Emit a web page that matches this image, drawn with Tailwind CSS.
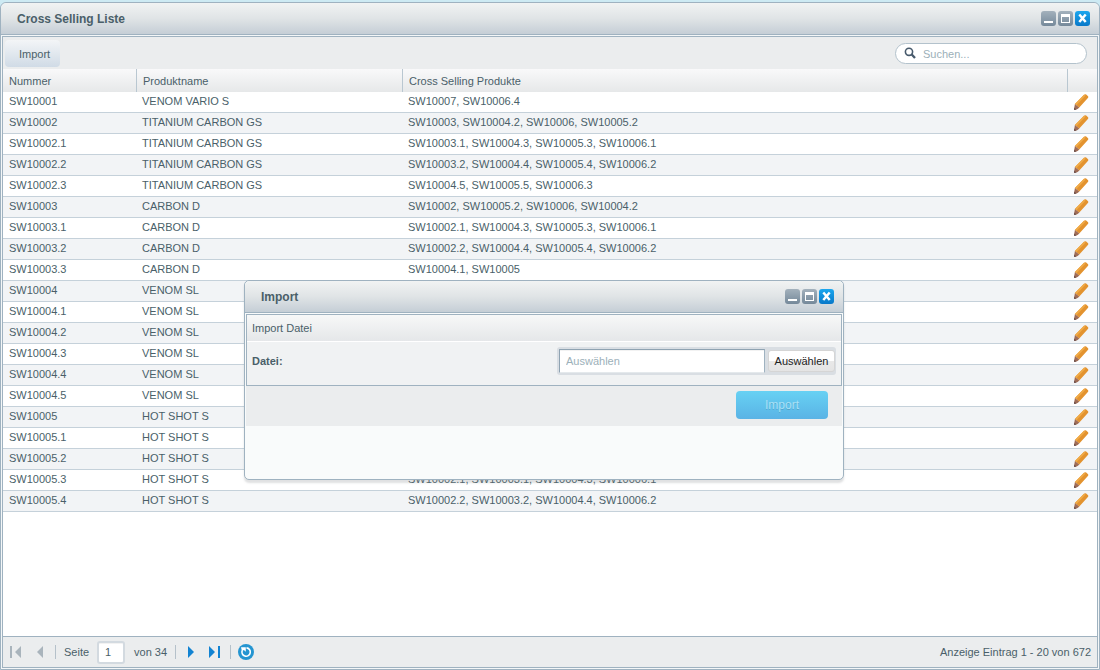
<!DOCTYPE html>
<html lang="de">
<head>
<meta charset="utf-8">
<title>Cross Selling Liste</title>
<script src="https://cdn.jsdelivr.net/npm/@tailwindcss/browser@4"></script>
</head>
<body class="relative flex h-screen flex-col overflow-hidden bg-[#cdeaf3] pt-0.5 font-['Liberation_Sans',Arial,sans-serif] text-[11px] leading-4 text-[#4a5f69]">

<svg class="hidden" aria-hidden="true">
  <symbol id="pencil" viewBox="0 0 16 16">
    <path d="M11 .8 Q12 -.3 13.200.6 L14.800 1.900 Q15.800 2.900 14.900 4 L6.300 13.600 L1.900 10 Z" fill="#e3932f"/>
    <path d="M11 .8 L1.900 10 L3.400 11.300 L12.600 1.400 Z" fill="#f0ab48"/>
    <path d="M1.900 10 L6.300 13.600 L4.600 15 L1.600 16 Q1 16 1 15.200 Z" fill="#a06c55"/>
    <path d="M1.200 13.400 L3.600 15.400 L1.600 16 Q1 16 1 15.200 Z" fill="#6f5350"/>
  </symbol>
</svg>

<main class="flex min-h-0 flex-1 flex-col rounded-t-md border border-[#9fb2c0] bg-[#f4f7f8]">
  <header class="flex h-8 shrink-0 items-center justify-between rounded-t-md border-b border-[#9fb2c0] bg-linear-to-b from-[#f1f3f3] via-[#e0e4e6] to-[#c5ced6] pr-[9px] pl-4">
    <h1 class="text-xs font-bold">Cross Selling Liste</h1>
    <div class="flex gap-0.5">
      <button aria-label="Minimieren" class="size-[15px] rounded-[3px] bg-linear-to-b from-[#a3b1bc] to-[#75899a]"><svg viewBox="0 0 15 15"><path d="M3 10h9v2H3z" fill="#fff"/></svg></button>
      <button aria-label="Maximieren" class="size-[15px] rounded-[3px] bg-linear-to-b from-[#a3b1bc] to-[#75899a]"><svg viewBox="0 0 15 15"><path d="M3 3h9v9H3zM4 6v5h7V6z" fill="#fff" fill-rule="evenodd"/></svg></button>
      <button aria-label="Schließen" class="size-[15px] rounded-[3px] bg-linear-to-b from-[#1ca7ee] to-[#0878c9]"><svg viewBox="0 0 15 15"><path d="M4.300 3.500l6.400 7.500M10.700 3.500l-6.400 7.500" stroke="#fff" stroke-width="2.500"/></svg></button>
    </div>
  </header>

  <div class="flex min-h-0 flex-1 flex-col p-px">
    <div class="flex min-h-0 flex-1 flex-col border border-[#9fb2c0] bg-white">
      <div class="flex h-8 shrink-0 items-center justify-between bg-[#ebedee] pr-2.5 pl-0.5">
        <button class="h-[27px] rounded bg-linear-to-b from-[#f3f5f7] to-[#d0dbe6] pt-0.5 pr-2.5 pl-3.5">Import</button>
        <div class="flex h-[21px] w-48 items-center gap-[7px] rounded-full border border-[#b3c2cc] bg-white pl-2">
          <svg class="size-3 shrink-0" viewBox="0 0 12 12" fill="none" stroke="#475a6c"><circle cx="5" cy="4.800" r="3.600" stroke-width="1.600"/><path d="M7.500 7.300L11 11" stroke-width="2.300"/></svg>
          <input aria-label="Suchen" placeholder="Suchen..." class="w-full min-w-0 bg-transparent pt-px outline-none placeholder:text-[#9cb0b9]">
        </div>
      </div>

      <div class="min-h-0 flex-1 overflow-hidden">
        <table class="w-full table-fixed border-separate border-spacing-0">
          <colgroup><col class="w-[133px]"><col class="w-[266px]"><col><col class="w-[30px]"></colgroup>
          <thead>
            <tr class="h-[23px] bg-linear-to-b from-[#f9f9fa] to-[#e6e8e9] text-left">
              <th class="p-0 pl-1.5 font-normal">Nummer</th>
              <th class="border-l border-[#b9c7d1] p-0 pl-1.5 font-normal">Produktname</th>
              <th class="border-l border-[#b9c7d1] p-0 pl-1.5 font-normal">Cross Selling Produkte</th>
              <th class="border-l border-[#b9c7d1] p-0" aria-label="Aktionen"></th>
            </tr>
          </thead>
          <tbody id="rows"></tbody>
        </table>
      </div>

      <footer class="flex h-[31px] shrink-0 items-center border-t border-[#9fb2c0] bg-[#ebedee] pr-1.5 pl-[7px]">
        <button aria-label="Erste Seite"><svg class="h-3 w-[11px]" viewBox="0 0 11 12" fill="#a9b4bc"><path d="M0 0h2v12H0zM11 0v12L5 6z"/></svg></button>
        <button aria-label="Vorherige Seite" class="ml-4"><svg class="h-3 w-[6px]" viewBox="0 0 6 12" fill="#a9b4bc"><path d="M6 0v12L0 6z"/></svg></button>
        <span class="ml-3 h-3.5 w-px bg-[#b5c1ca]"></span>
        <label for="page" class="ml-2">Seite</label>
        <input id="page" value="1" class="ml-2 h-[23px] w-7 rounded-[3px] border-2 border-[#d3dae0] bg-white pl-1.5 inset-shadow-2xs outline-none">
        <span class="ml-[9px]">von 34</span>
        <span class="ml-2 h-3.5 w-px bg-[#b5c1ca]"></span>
        <button aria-label="Nächste Seite" class="ml-3"><svg class="h-3 w-[6px]" viewBox="0 0 6 12" fill="#1283d2"><path d="M0 0v12l6-6z"/></svg></button>
        <button aria-label="Letzte Seite" class="ml-[15px]"><svg class="h-3 w-[11px]" viewBox="0 0 11 12" fill="#1283d2"><path d="M9 0h2v12H9zM0 0v12l6-6z"/></svg></button>
        <span class="ml-2.5 h-3.5 w-px bg-[#b5c1ca]"></span>
        <button aria-label="Aktualisieren" class="ml-[7px]"><svg class="size-4" viewBox="0 0 16 16" fill="none"><circle cx="8" cy="8" r="8" fill="#2495d1"/><path d="M8.500 3.900a4.200 4.200 0 1 1-4.300 2.600" stroke="#fff" stroke-width="1.600"/><path d="M3 3.200h4.800v4.600L5.800 6 4 7.200z" fill="#fff"/></svg></button>
        <span class="ml-auto">Anzeige Eintrag 1 - 20 von 672</span>
      </footer>
    </div>
  </div>
</main>

<section role="dialog" aria-labelledby="dialogTitle" class="absolute top-[280px] left-[244px] flex h-[200px] w-[600px] flex-col rounded-[5px] border border-[#9fb2c0] bg-[#f9fbfb] shadow-[0_3px_2px_rgba(130,135,140,0.25)]">
  <header class="flex h-8 shrink-0 items-center justify-between rounded-t-[5px] border-b border-[#9fb2c0] bg-linear-to-b from-[#f1f3f3] via-[#e0e4e6] to-[#c5ced6] pr-[9px] pl-4">
    <h2 id="dialogTitle" class="text-xs font-bold">Import</h2>
    <div class="flex gap-0.5">
      <button aria-label="Minimieren" class="size-[15px] rounded-[3px] bg-linear-to-b from-[#a3b1bc] to-[#75899a]"><svg viewBox="0 0 15 15"><path d="M3 10h9v2H3z" fill="#fff"/></svg></button>
      <button aria-label="Maximieren" class="size-[15px] rounded-[3px] bg-linear-to-b from-[#a3b1bc] to-[#75899a]"><svg viewBox="0 0 15 15"><path d="M3 3h9v9H3zM4 6v5h7V6z" fill="#fff" fill-rule="evenodd"/></svg></button>
      <button aria-label="Schließen" class="size-[15px] rounded-[3px] bg-linear-to-b from-[#1ca7ee] to-[#0878c9]"><svg viewBox="0 0 15 15"><path d="M4.300 3.500l6.400 7.500M10.700 3.500l-6.400 7.500" stroke="#fff" stroke-width="2.500"/></svg></button>
    </div>
  </header>
  <div class="p-px">
    <div class="border border-[#9fb2c0] bg-[#f0f2f3]">
      <h3 class="flex h-[27px] items-center border-b border-white bg-linear-to-b from-[#f7f8f8] to-[#e5e7e9] pl-[5px]">Import Datei</h3>
      <div class="flex h-[43px] items-start justify-between pt-[5px] pr-[5px] pl-[5px]">
        <label for="file" class="flex h-7 items-center font-bold">Datei:</label>
        <div class="flex h-7 w-[279px] items-center gap-[3px] rounded-[3px] bg-[#d9dee3] py-0.5 pr-px pl-0.5">
          <input id="file" placeholder="Auswählen" class="h-6 min-w-0 flex-1 border border-t-[#8fa3b2] border-r-[#9fb2c0] border-b-[#e4e9ec] border-l-[#8fa3b2] bg-white pl-1.5 inset-shadow-2xs outline-none placeholder:text-[#9cb0b9]">
          <button class="h-[22px] w-[67px] rounded-[3px] border border-[#d5d5d5] bg-linear-to-b from-white from-50% via-[#e9e9e9] via-50% to-[#e4e4e4] text-[#222]">Auswählen</button>
        </div>
      </div>
    </div>
    <div class="flex h-10 items-start justify-end bg-[#ebedee] pt-[5px] pr-3.5">
      <button disabled class="h-7 w-[92px] rounded bg-linear-to-b from-[#67d1f3] to-[#5ab3e5] text-xs text-[#a9e0f5] text-shadow-2xs">Import</button>
    </div>
  </div>
</section>

<script>
const rows = [
  ["SW10001", "VENOM VARIO S", "SW10007, SW10006.4"],
  ["SW10002", "TITANIUM CARBON GS", "SW10003, SW10004.2, SW10006, SW10005.2"],
  ["SW10002.1", "TITANIUM CARBON GS", "SW10003.1, SW10004.3, SW10005.3, SW10006.1"],
  ["SW10002.2", "TITANIUM CARBON GS", "SW10003.2, SW10004.4, SW10005.4, SW10006.2"],
  ["SW10002.3", "TITANIUM CARBON GS", "SW10004.5, SW10005.5, SW10006.3"],
  ["SW10003", "CARBON D", "SW10002, SW10005.2, SW10006, SW10004.2"],
  ["SW10003.1", "CARBON D", "SW10002.1, SW10004.3, SW10005.3, SW10006.1"],
  ["SW10003.2", "CARBON D", "SW10002.2, SW10004.4, SW10005.4, SW10006.2"],
  ["SW10003.3", "CARBON D", "SW10004.1, SW10005"],
  ["SW10004", "VENOM SL", ""],
  ["SW10004.1", "VENOM SL", ""],
  ["SW10004.2", "VENOM SL", ""],
  ["SW10004.3", "VENOM SL", ""],
  ["SW10004.4", "VENOM SL", ""],
  ["SW10004.5", "VENOM SL", ""],
  ["SW10005", "HOT SHOT S", ""],
  ["SW10005.1", "HOT SHOT S", ""],
  ["SW10005.2", "HOT SHOT S", ""],
  ["SW10005.3", "HOT SHOT S", "SW10002.1, SW10003.1, SW10004.3, SW10006.1"],
  ["SW10005.4", "HOT SHOT S", "SW10002.2, SW10003.2, SW10004.4, SW10006.2"]
];
document.getElementById("rows").innerHTML = rows.map(([number, name, products]) => `
  <tr class="h-[21px] even:bg-[#f2f4f6]">
    <td class="border-b border-[#c5d1da] p-0 pb-0.5 pl-1.5">${number}</td>
    <td class="border-b border-[#c5d1da] p-0 pb-0.5 pl-1.5">${name}</td>
    <td class="border-b border-[#c5d1da] p-0 pb-0.5 pl-1.5">${products}</td>
    <td class="border-b border-[#c5d1da] p-0 pl-1.5"><button aria-label="${number} bearbeiten" class="block"><svg class="size-4"><use href="#pencil"/></svg></button></td>
  </tr>`).join("");
</script>
</body>
</html>
